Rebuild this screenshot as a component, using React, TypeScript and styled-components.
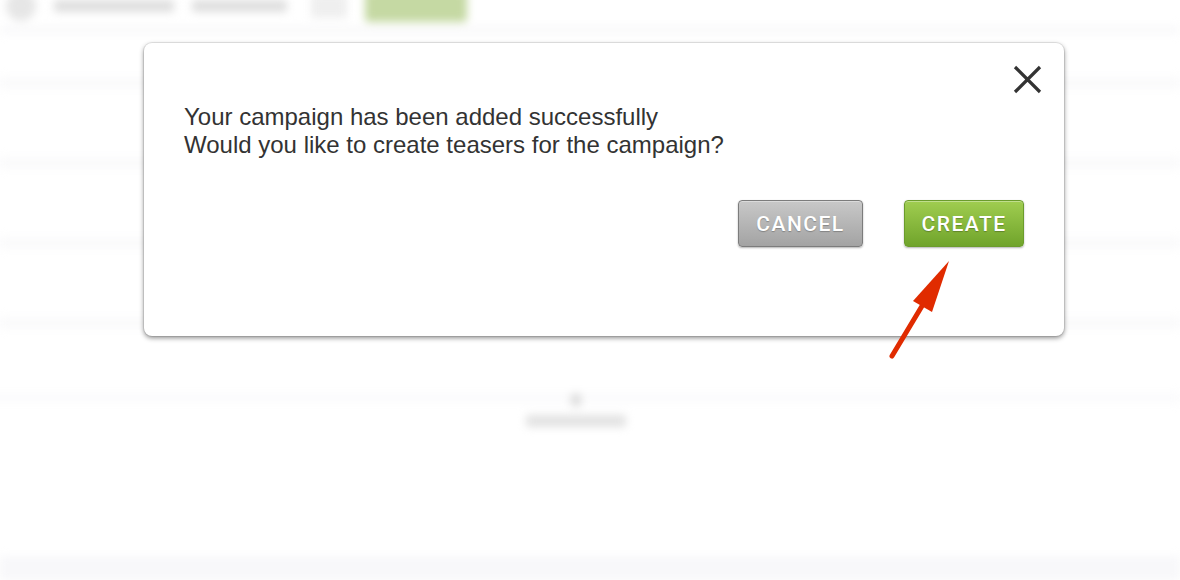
import styled, { createGlobalStyle } from "styled-components";

const GlobalStyle = createGlobalStyle`
  html, body {
    margin: 0;
    padding: 0;
    background: #ffffff;
  }
  body {
    font-family: "Liberation Sans", Arial, sans-serif;
    width: 1180px;
    height: 580px;
    overflow: hidden;
  }
`;

function CloseIcon() {
  return (
    <svg width="29" height="29" viewBox="0 0 29 29">
      <path
        d="M2 2 L27 27 M27 2 L2 27"
        stroke="#333333"
        strokeWidth="3.2"
        fill="none"
      />
    </svg>
  );
}

function Pointer() {
  return (
    <svg width="1180" height="580" viewBox="0 0 1180 580">
      <line
        x1="892"
        y1="356"
        x2="922"
        y2="306"
        stroke="#e02b00"
        strokeWidth="5"
        strokeLinecap="round"
      />
      <polygon points="949,261 913,301 932,312" fill="#e02b00" />
    </svg>
  );
}

function App() {
  return (
    <Screen>
      <GlobalStyle />
      <Page>
        <TopBar>
          <Avatar />
          <TitleBlur $w={120} />
          <TitleBlur $w={95} />
          <Chip />
          <GhostButton />
        </TopBar>
        <Rows>
          <Row />
          <Row />
          <Row />
          <Row />
        </Rows>
        <EmptyState>
          <EmptyIcon />
          <EmptyText />
        </EmptyState>
        <Footer />
      </Page>

      <Modal>
        <CloseButton aria-label="Close">
          <CloseIcon />
        </CloseButton>
        <Message>
          Your campaign has been added successfully
          <br />
          Would you like to create teasers for the campaign?
        </Message>
        <Actions>
          <ActionButton $variant="cancel">CANCEL</ActionButton>
          <ActionButton $variant="create">CREATE</ActionButton>
        </Actions>
      </Modal>

      <ArrowLayer>
        <Pointer />
      </ArrowLayer>
    </Screen>
  );
}

const Screen = styled.div`
  position: relative;
  width: 1180px;
  height: 580px;
  overflow: hidden;
  background: #ffffff;
`;

const Page = styled.div`
  display: flex;
  flex-direction: column;
  height: 580px;
  filter: blur(4px);
`;

const TopBar = styled.div`
  display: flex;
  align-items: center;
  gap: 18px;
  height: 40px;
  margin-top: -14px;
  padding-left: 6px;
  border-bottom: 8px solid #f9f9fa;
`;

const Avatar = styled.div`
  width: 30px;
  height: 30px;
  border-radius: 50%;
  background: #e6e6e6;
`;

const TitleBlur = styled.div<{ $w: number }>`
  width: ${(p) => p.$w}px;
  height: 12px;
  border-radius: 3px;
  background: #dedede;
`;

const Chip = styled.div`
  width: 36px;
  height: 24px;
  margin-left: 6px;
  border-radius: 3px;
  background: #efefef;
`;

const GhostButton = styled.div`
  width: 102px;
  height: 32px;
  border-radius: 4px;
  background: #c5d9a3;
`;

const Rows = styled.div`
  display: flex;
  flex-direction: column;
  padding-top: 43px;
`;

const Row = styled.div`
  height: 68px;
  border-top: 12px solid #fafafb;
`;

const EmptyState = styled.div`
  display: flex;
  flex-direction: column;
  align-items: center;
  gap: 8px;
  margin: -4px 0 0 -28px;
  padding-top: 0;
  border-top: 10px solid #fbfbfc;
`;

const EmptyIcon = styled.div`
  width: 10px;
  height: 14px;
  margin-top: -10px;
  border-radius: 5px;
  background: #dadada;
`;

const EmptyText = styled.div`
  width: 100px;
  height: 12px;
  border-radius: 3px;
  background: #e2e2e2;
`;

const Footer = styled.div`
  margin-top: auto;
  height: 24px;
  background: #f8f8fa;
`;

const Modal = styled.div`
  position: absolute;
  left: 144px;
  top: 43px;
  width: 920px;
  height: 293px;
  box-sizing: border-box;
  padding: 60px 40px 0 40px;
  display: flex;
  flex-direction: column;
  background: #ffffff;
  border-radius: 8px;
  box-shadow: 0 0 0 1px rgba(0, 0, 0, 0.08), 0 2px 5px rgba(0, 0, 0, 0.45);
`;

const CloseButton = styled.button`
  position: absolute;
  top: 22px;
  right: 22px;
  display: flex;
  padding: 0;
  border: none;
  background: none;
  cursor: pointer;
`;

const Message = styled.p`
  margin: 0;
  font-family: "Liberation Sans", Arial, sans-serif;
  font-size: 24px;
  line-height: 28px;
  color: #333333;
`;

const Actions = styled.div`
  display: flex;
  justify-content: flex-end;
  gap: 41px;
  margin-top: 41px;
`;

const ActionButton = styled.button<{ $variant: "cancel" | "create" }>`
  width: ${(p) => (p.$variant === "cancel" ? 125 : 120)}px;
  height: 47px;
  padding: 0;
  border-radius: 4px;
  border: 1px solid
    ${(p) => (p.$variant === "cancel" ? "#7c7c7c" : "#6b9c2c")};
  background: ${(p) =>
    p.$variant === "cancel"
      ? "linear-gradient(#c8c8c8, #a3a3a3)"
      : "linear-gradient(#a0cd50, #70a42b)"};
  box-shadow: inset 0 1px 0 rgba(255, 255, 255, 0.35),
    0 1px 2px rgba(0, 0, 0, 0.3);
  color: #ffffff;
  font-family: Roboto, "DejaVu Sans", sans-serif;
  font-weight: 500;
  font-size: 21px;
  letter-spacing: 1.5px;
  text-shadow: 0 1px 1px rgba(0, 0, 0, 0.25);
  cursor: pointer;
`;

const ArrowLayer = styled.div`
  position: absolute;
  inset: 0;
  pointer-events: none;
`;

export default App;
